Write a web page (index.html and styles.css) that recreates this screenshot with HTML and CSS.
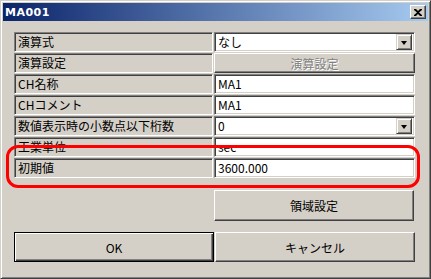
FILE: index.html
```html
<!DOCTYPE html>
<html lang="ja">
<head>
    <meta charset="UTF-8">
    <title>MA001</title>
    <link rel="stylesheet" href="styles.css">
</head>
<body>
    <div class="window">
        <div class="titlebar">
            <span class="title">MA001</span>
            <span class="close-btn">
                <svg width="8" height="7" viewBox="0 0 8 7"><path d="M0 0h2l2 2 2-2h2v1l-3 2.5 3 2.5v1h-2l-2-2-2 2h-2v-1l3-2.5-3-2.5z" fill="#000"/></svg>
            </span>
        </div>
        <div class="content">
            <div class="grid">
                <div class="label">演算式</div>
                <div class="field combo"><span class="val">なし</span><span class="drop"></span></div>

                <div class="label">演算設定</div>
                <div class="btn disabled">演算設定</div>

                <div class="label">CH名称</div>
                <div class="field">MA1</div>

                <div class="label">CHコメント</div>
                <div class="field">MA1</div>

                <div class="label">数値表示時の小数点以下桁数</div>
                <div class="field combo"><span class="val">0</span><span class="drop"></span></div>

                <div class="label">工業単位</div>
                <div class="field">sec</div>

                <div class="label">初期値</div>
                <div class="field">3600.000</div>
            </div>
            <div class="region-row">
                <div class="btn region">領域設定</div>
            </div>
            <div class="footer">
                <div class="btn default">OK</div>
                <div class="btn">キャンセル</div>
            </div>
        </div>
        <!-- 赤い強調枠 -->
        <div class="highlight"></div>
    </div>
</body>
</html>
```

FILE: styles.css
```css
/* 全体 */
body {
    margin: 0;
    padding: 0;
    background: #d4d0c8;
    font-family: "Noto Sans CJK JP", "DejaVu Sans", sans-serif;
    font-size: 12px;
    color: #000;
}

/* ダイアログ枠 */
.window {
    position: relative;
    width: 431px;
    height: 279px;
    box-sizing: border-box;
    background: #d4d0c8;
    border-top: 1px solid #d4d0c8;
    border-left: 1px solid #d4d0c8;
    border-right: 1px solid #404040;
    border-bottom: 1px solid #404040;
    box-shadow: inset 1px 1px #fff, inset -1px -1px #808080;
    padding: 2px;
}

.titlebar {
    height: 18px;
    display: flex;
    align-items: center;
    justify-content: space-between;
    padding: 0 2px 0 2px;
    background: linear-gradient(to right, #0a246a, #a6caf0);
}

.title {
    color: #fff;
    font-family: "DejaVu Sans", sans-serif;
    font-weight: bold;
    font-size: 11px;
    letter-spacing: 0.5px;
}

.close-btn {
    width: 16px;
    height: 14px;
    box-sizing: border-box;
    display: flex;
    align-items: center;
    justify-content: center;
    background: #d4d0c8;
    border-top: 1px solid #fff;
    border-left: 1px solid #fff;
    border-right: 1px solid #404040;
    border-bottom: 1px solid #404040;
    box-shadow: inset -1px -1px #808080;
}

.content {
    padding: 11px 0 0 11px;
}

/* 項目の表 */
.grid {
    display: grid;
    grid-template-columns: 199px 201px;
    grid-auto-rows: 20px;
    column-gap: 1px;
    row-gap: 1px;
}

.label,
.field {
    box-sizing: border-box;
    border-top: 1px solid #808080;
    border-left: 1px solid #808080;
    border-right: 1px solid #fff;
    border-bottom: 1px solid #fff;
    box-shadow: inset 1px 1px #404040, inset -1px -1px #d4d0c8;
    padding: 0 3px;
    line-height: 18px;
    white-space: nowrap;
    overflow: hidden;
}

.label {
    background: #d4d0c8;
}

.field {
    background: #fff;
}

.combo {
    display: flex;
    justify-content: space-between;
    padding-right: 2px;
}

.drop {
    width: 16px;
    height: 16px;
    margin-top: 1px;
    box-sizing: border-box;
    background: #d4d0c8;
    border-top: 1px solid #d4d0c8;
    border-left: 1px solid #d4d0c8;
    border-right: 1px solid #404040;
    border-bottom: 1px solid #404040;
    box-shadow: inset 1px 1px #fff, inset -1px -1px #808080;
    position: relative;
}

.drop::after {
    content: "";
    position: absolute;
    left: 4px;
    top: 6px;
    border-left: 3.5px solid transparent;
    border-right: 3.5px solid transparent;
    border-top: 4px solid #000;
}

/* ボタン */
.btn {
    box-sizing: border-box;
    display: flex;
    align-items: center;
    justify-content: center;
    background: #d4d0c8;
    border-top: 1px solid #fff;
    border-left: 1px solid #fff;
    border-right: 1px solid #404040;
    border-bottom: 1px solid #404040;
    box-shadow: inset -1px -1px #808080;
}

.btn.disabled {
    color: #808080;
    text-shadow: 1px 1px #fff;
}

.region-row {
    display: flex;
    padding-left: 200px;
    margin-top: 12px;
}

.region {
    width: 200px;
    height: 31px;
}

.footer {
    display: flex;
    gap: 1px;
    margin-top: 11px;
}

.footer .btn {
    width: 200px;
    height: 30px;
}

.btn.default {
    border: 1px solid #000;
    box-shadow: inset 1px 1px #fff, inset -1px -1px #404040, inset -2px -2px #808080;
}

/* 赤枠 */
.highlight {
    position: absolute;
    left: 5px;
    top: 144px;
    width: 414px;
    height: 43px;
    box-sizing: border-box;
    border: 3px solid #ff0000;
    border-radius: 12px;
}
```
